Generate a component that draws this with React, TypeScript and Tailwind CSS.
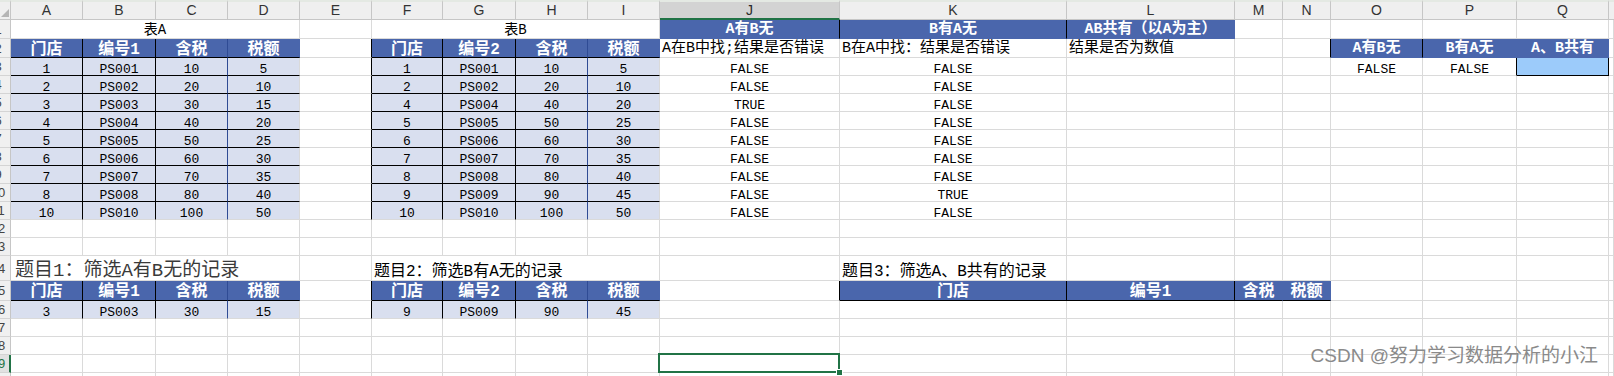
import { Fragment } from "react";

type Cell = { t?: string; c: string; sel?: boolean };

const base = "flex min-w-0 whitespace-nowrap border-r border-b";

// plain sheet cells
const P = "bg-white border-r-[#dadada] border-b-[#dadada]";
const PK = "bg-white border-r-black border-b-[#dadada]";

// blue table headers
const HD = "bg-[#4a66ac] border-b-black text-white font-bold text-[16px] justify-center items-center pt-[3px]";
const TH = "bg-[#4a66ac] border-b-[#4a66ac] text-white font-bold text-[15px] justify-center items-center pt-[3px]";

// filled data cells
const DT = "bg-[#d9dfef] justify-center items-end leading-[10px] text-[13px]";
const FV = "bg-white justify-center items-end leading-[10px] text-[13px] border-r-[#dadada] border-b-[#dadada]";
const NOTE = "bg-white items-center pt-[3px] pl-[2px] text-[15px] border-r-[#dadada] border-b-[#dadada]";

const tableA = [
  ["1", "PS001", "10", "5"],
  ["2", "PS002", "20", "10"],
  ["3", "PS003", "30", "15"],
  ["4", "PS004", "40", "20"],
  ["5", "PS005", "50", "25"],
  ["6", "PS006", "60", "30"],
  ["7", "PS007", "70", "35"],
  ["8", "PS008", "80", "40"],
  ["10", "PS010", "100", "50"],
];

const tableB = [
  ["1", "PS001", "10", "5"],
  ["2", "PS002", "20", "10"],
  ["4", "PS004", "40", "20"],
  ["5", "PS005", "50", "25"],
  ["6", "PS006", "60", "30"],
  ["7", "PS007", "70", "35"],
  ["8", "PS008", "80", "40"],
  ["9", "PS009", "90", "45"],
  ["10", "PS010", "100", "50"],
];

const colJ = ["FALSE", "FALSE", "TRUE", "FALSE", "FALSE", "FALSE", "FALSE", "FALSE", "FALSE"];
const colK = ["FALSE", "FALSE", "FALSE", "FALSE", "FALSE", "FALSE", "FALSE", "TRUE", "FALSE"];

const letters = ["A", "B", "C", "D", "E", "F", "G", "H", "I", "J", "K", "L", "M", "N", "O", "P", "Q"];

function head(second: string): Cell[] {
  return [
    { t: "门店", c: `${HD} border-r-black` },
    { t: second, c: `${HD} border-r-black` },
    { t: "含税", c: `${HD} border-r-[#2f4b94]` },
    { t: "税额", c: `${HD} border-r-[#4a66ac]` },
  ];
}

function data(v: string[], last: boolean): Cell[] {
  if (last) {
    return [
      { t: v[0], c: `${DT} border-r-black border-b-[#dadada]` },
      { t: v[1], c: `${DT} border-r-black border-b-[#dadada]` },
      { t: v[2], c: `${DT} border-r-[#2f4b94] border-b-[#dadada]` },
      { t: v[3], c: `${DT} border-r-[#dadada] border-b-[#dadada]` },
    ];
  }
  return [
    { t: v[0], c: `${DT} border-r-black border-b-black` },
    { t: v[1], c: `${DT} border-r-black border-b-black` },
    { t: v[2], c: `${DT} border-r-[#2f4b94] border-b-black` },
    { t: v[3], c: `${DT} border-r-[#dadada] border-b-black` },
  ];
}

function blank(n: number): Cell[] {
  return Array.from({ length: n }, () => ({ c: P }));
}

const rows: Cell[][] = [
  // 1
  [
    { t: "表A", c: `col-span-4 justify-center items-center pt-[3px] text-[14px] ${P}` },
    { c: P },
    { t: "表B", c: `col-span-4 justify-center items-center pt-[3px] text-[14px] ${P}` },
    { t: "A有B无", c: `${TH} border-r-black` },
    { t: "B有A无", c: `${TH} border-r-black` },
    { t: "AB共有（以A为主）", c: `${TH} border-r-[#4a66ac]` },
    ...blank(6),
  ],
  // 2
  [
    ...head("编号1"),
    { c: PK },
    ...head("编号2"),
    { t: "A在B中找;结果是否错误", c: NOTE },
    { t: "B在A中找：结果是否错误", c: NOTE },
    { t: "结果是否为数值", c: NOTE },
    { c: P },
    { c: PK },
    { t: "A有B无", c: `${TH} border-r-black` },
    { t: "B有A无", c: `${TH} border-r-[#4a66ac]` },
    { t: "A、B共有", c: `${TH} border-r-[#4a66ac]` },
    { c: P },
  ],
  // 3 - 11
  ...tableA.map((a, i) => {
    const last = i === tableA.length - 1;
    const row: Cell[] = [
      ...data(a, last),
      { c: PK },
      ...data(tableB[i], last),
      { t: colJ[i], c: FV },
      { t: colK[i], c: FV },
      { c: P },
      { c: P },
      { c: P },
    ];
    if (i === 0) {
      row.push(
        { t: "FALSE", c: FV },
        { t: "FALSE", c: "bg-white justify-center items-end leading-[10px] text-[13px] border-r-black border-b-[#dadada]" },
        { c: "bg-[#9ccbfa] border-r-black border-b-black" },
        { c: P }
      );
    } else {
      row.push(...blank(4));
    }
    return row;
  }),
  // 12, 13
  blank(18),
  blank(18),
  // 14
  [
    { t: "题目1：筛选A有B无的记录", c: `col-span-4 items-end pl-[4px] text-[19px] leading-[18px] text-[#3a3a3a] ${P}` },
    { c: P },
    { t: "题目2：筛选B有A无的记录", c: `col-span-4 items-end pl-[2px] text-[16px] leading-[16px] ${P}` },
    { c: P },
    { t: "题目3：筛选A、B共有的记录", c: `items-end pl-[2px] text-[16px] leading-[16px] ${P}` },
    ...blank(7),
  ],
  // 15
  [
    ...head("编号1"),
    { c: PK },
    ...head("编号2"),
    { c: PK },
    { t: "门店", c: `${HD} border-r-black` },
    { t: "编号1", c: `${HD} border-r-black` },
    { t: "含税", c: `${HD} border-r-[#4a66ac]` },
    { t: "税额", c: `${HD} border-r-[#4a66ac]` },
    ...blank(4),
  ],
  // 16
  [
    ...data(["3", "PS003", "30", "15"], true),
    { c: PK },
    ...data(["9", "PS009", "90", "45"], true),
    ...blank(9),
  ],
  // 17 - 20
  blank(18),
  blank(18),
  [...blank(9), { c: P, sel: true }, ...blank(8)],
  blank(18),
];

function RowHead({ n }: { n: number }) {
  const active = n === 19;
  return (
    <div
      className={
        active
          ? "flex items-center overflow-hidden bg-[#e1e1e1] border-r-2 border-b border-r-[#217346] border-b-[#d4d4d4]"
          : "flex items-center overflow-hidden bg-[#f0f0f0] border-r border-b border-r-[#c6c6c6] border-b-[#d4d4d4]"
      }
    >
      <div
        className={
          active
            ? "w-[26px] shrink-0 -ml-[15px] text-center text-[13px] leading-none font-['Liberation_Sans',sans-serif] text-[#217346]"
            : "w-[26px] shrink-0 -ml-[15px] text-center text-[13px] leading-none font-['Liberation_Sans',sans-serif] text-[#444]"
        }
      >
        {n}
      </div>
    </div>
  );
}

export default function App() {
  return (
    <div className="relative w-[1614px] h-[376px] overflow-hidden bg-white text-black font-['Liberation_Mono','Noto_Sans_CJK_SC',monospace]">
      <div className="grid grid-cols-[11px_72px_73px_72px_72px_72px_71px_73px_72px_72px_180px_227px_168px_48px_48px_92px_94px_92px_5px] grid-rows-[20px_19px_19px_18px_18px_18px_18px_18px_18px_18px_18px_18px_18px_18px_25px_20px_18px_18px_18px_18px_18px]">
        {/* column letters */}
        <div className="flex items-end justify-end bg-[#efefef] border-t-2 border-r border-b border-t-[#e4e9e3] border-r-[#c6c6c6] border-b-[#c6c6c6] pr-[1px] pb-[2px]">
          <svg width="8" height="8" viewBox="0 0 8 8">
            <path d="M8 0 L8 8 L0 8 Z" fill="#b5b5b5" />
          </svg>
        </div>
        {letters.map((l) => (
          <div
            key={l}
            className={
              l === "J"
                ? "flex items-center justify-center bg-[#d3d3d3] border-t-2 border-r border-b-2 border-t-[#e4e9e3] border-r-[#c6c6c6] border-b-[#217346] text-[14px] font-['Liberation_Sans',sans-serif] text-[#2b2b2b]"
                : "flex items-center justify-center bg-[#efefef] border-t-2 border-r border-b border-t-[#e4e9e3] border-r-[#c6c6c6] border-b-[#c6c6c6] text-[14px] font-['Liberation_Sans',sans-serif] text-[#333]"
            }
          >
            {l}
          </div>
        ))}
        <div className="bg-[#efefef] border-t-2 border-b border-t-[#e4e9e3] border-b-[#c6c6c6]" />

        {rows.map((row, ri) => (
          <Fragment key={ri}>
            <RowHead n={ri + 1} />
            {row.map((cell, ci) => (
              <div key={ci} className={`${base} ${cell.c} ${cell.sel ? "relative" : ""}`}>
                {cell.t}
                {cell.sel && (
                  <>
                    <div className="absolute -left-[2px] -top-[2px] -right-px -bottom-px border-2 border-[#217346]" />
                    <div className="absolute -right-[4px] -bottom-[4px] w-[7px] h-[7px] bg-[#217346] border border-white" />
                  </>
                )}
              </div>
            ))}
          </Fragment>
        ))}
      </div>

      {/* blog watermark */}
      <div className="absolute top-[346px] right-[16px] text-[19px] leading-none text-[#8a8a8a] font-['Liberation_Sans','Noto_Sans_CJK_SC',sans-serif]">
        CSDN @努力学习数据分析的小江
      </div>
    </div>
  );
}
